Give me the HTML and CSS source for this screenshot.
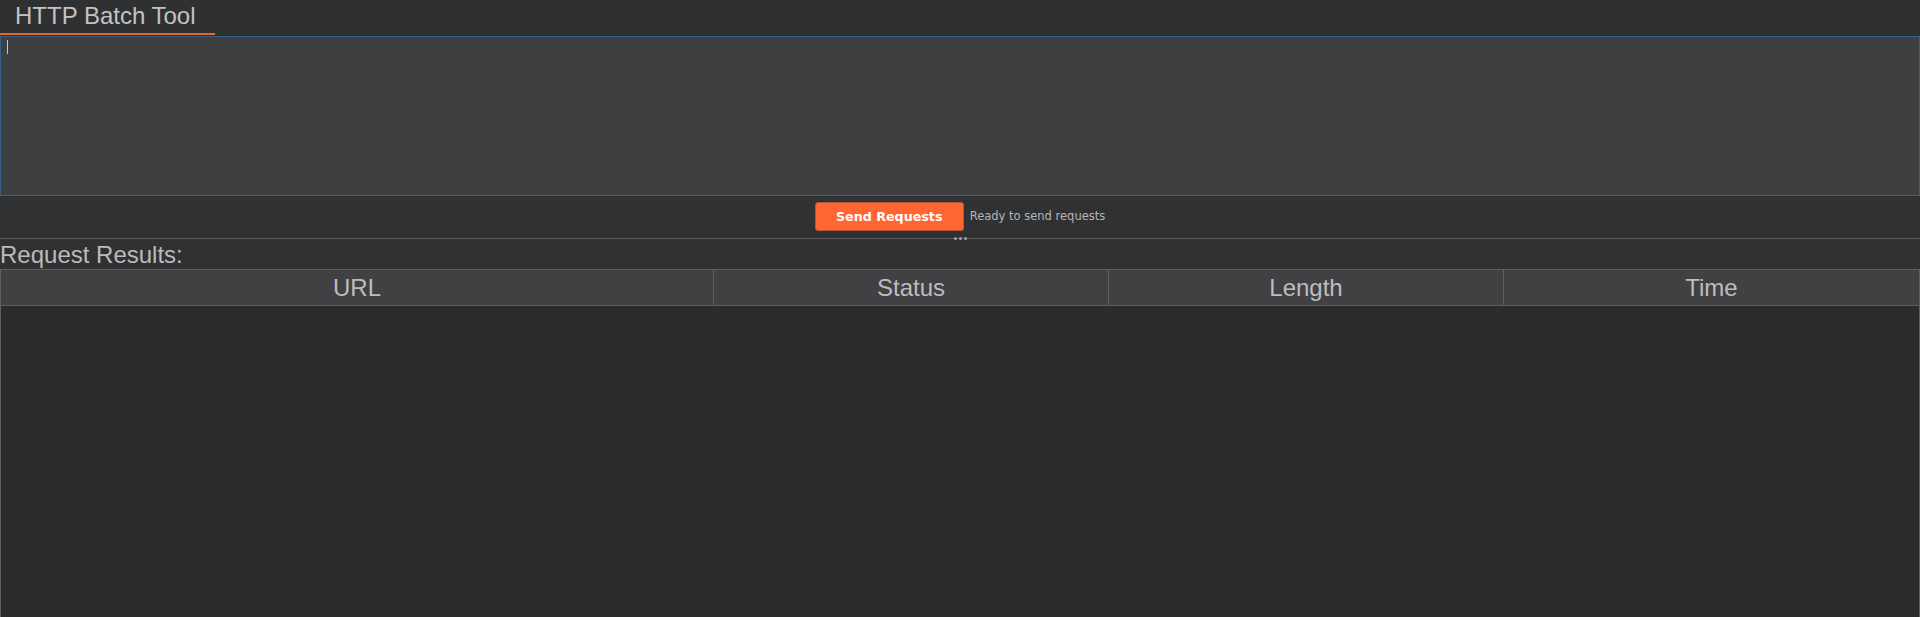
FILE: index.html
```html
<!DOCTYPE html>
<html>
<head>
<meta charset="utf-8">
<link rel="stylesheet" href="styles.css">
</head>
<body>
<div class="app">
  <div class="tabbar">
    <div class="tab">HTTP Batch Tool</div>
  </div>
  <div class="editor"><span class="caret"></span></div>
  <div class="actions">
    <button class="send">Send Requests</button>
    <span class="status">Ready to send requests</span>
  </div>
  <div class="splitter"><span class="grip"><i></i><i></i><i></i></span></div>
  <div class="results-label">Request Results:</div>
  <div class="table">
    <div class="thead">
      <div class="th c-url">URL</div>
      <div class="th c-status">Status</div>
      <div class="th c-length">Length</div>
      <div class="th c-time">Time</div>
    </div>
    <div class="tbody"></div>
  </div>
</div>
</body>
</html>
```
FILE: styles.css
```css
html, body {
  margin: 0;
  padding: 0;
  height: 100%;
  background: #303133;
  overflow: hidden;
}
.app {
  display: flex;
  flex-direction: column;
  height: 617px;
  font-family: "Liberation Sans", Arial, sans-serif;
  color: #bbbbbb;
}
.tabbar {
  height: 36px;
  display: flex;
  background: #2f3032;
}
.tab {
  width: 215px;
  box-sizing: border-box;
  padding-left: 15px;
  padding-top: 2px;
  font-size: 24px;
  line-height: 28px;
  height: 35px;
  border-bottom: 2px solid #e5672d;
  color: #c3c3c3;
}
.editor {
  height: 160px;
  box-sizing: border-box;
  border: 1px solid #3a5f85;
  background: #3e3f41;
  padding: 3px 6px;
}
.caret {
  display: block;
  width: 1px;
  height: 14px;
  background: #c8c8c8;
}
.actions {
  height: 42px;
  display: flex;
  align-items: center;
  justify-content: center;
  gap: 6px;
  padding-bottom: 2px;
  box-sizing: border-box;
}
.send {
  width: 149px;
  height: 29px;
  box-sizing: border-box;
  background: #ff6633;
  border: 1px solid #b9572f;
  border-radius: 3px;
  color: #ffffff;
  font-family: "DejaVu Sans", sans-serif;
  font-weight: bold;
  font-size: 12.7px;
  padding: 0;
}
.status {
  font-family: "DejaVu Sans", sans-serif;
  font-size: 11.5px;
  color: #b5b5b5;
}
.splitter {
  height: 1px;
  background: #5c5d5f;
  position: relative;
  display: flex;
  justify-content: center;
}
.grip {
  position: absolute;
  top: -1px;
  display: flex;
  gap: 2px;
}
.grip i {
  width: 3px;
  height: 3px;
  border-radius: 50%;
  background: #a0a0a0;
}
.results-label {
  height: 30px;
  font-size: 24px;
  line-height: 30px;
  color: #bbbbbb;
  padding-top: 1px;
  box-sizing: border-box;
}
.table {
  flex: 1;
  display: flex;
  flex-direction: column;
  border-left: 1px solid #5e5f61;
  border-right: 1px solid #5e5f61;
}
.thead {
  display: grid;
  grid-template-columns: 713px 395px 395px 1fr;
  height: 37px;
  box-sizing: border-box;
  border-top: 1px solid #5e5f61;
  border-bottom: 1px solid #5e5f61;
  background: #414143;
}
.th {
  display: flex;
  align-items: center;
  justify-content: center;
  font-size: 24px;
  color: #bdbdbd;
  border-right: 1px solid #5e5f61;
  padding-top: 1px;
}
.th.c-time {
  border-right: none;
}
.tbody {
  flex: 1;
  background: #2b2b2b;
}
```
